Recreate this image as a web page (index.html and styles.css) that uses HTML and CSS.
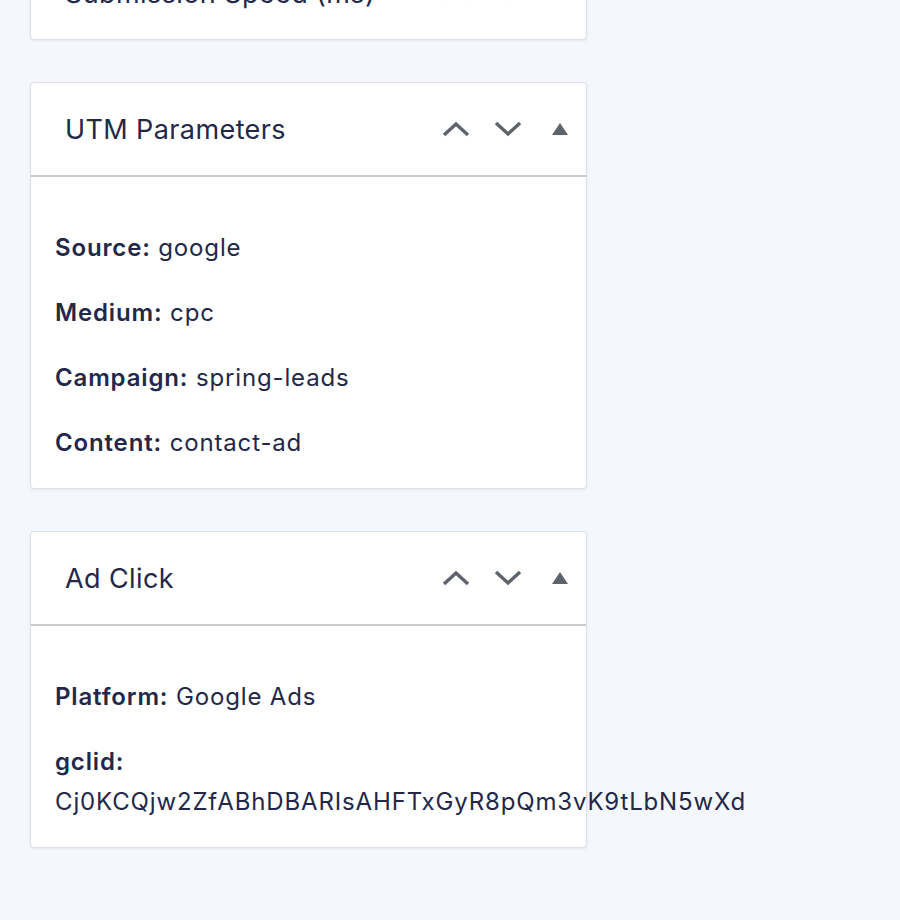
FILE: index.html
```html
<!DOCTYPE html>
<html lang="en">
<head>
    <meta charset="UTF-8">
    <meta name="viewport" content="width=device-width, initial-scale=1.0">
    <title>Entry Details</title>
    <link rel="stylesheet" href="styles.css">
</head>
<body>

<div class="sidebar">

    <!-- Collapsed box -->
    <div class="postbox closed">
        <div class="postbox-header">
            <h2>Submission Speed (ms)</h2>
            <div class="handle-actions">
                <button class="handle up"><svg viewBox="0 0 28 16"><path d="M2 14 L14 3 L26 14"/></svg></button>
                <button class="handle down"><svg viewBox="0 0 28 16"><path d="M2 2 L14 13 L26 2"/></svg></button>
                <button class="handle toggle"><svg viewBox="0 0 16 12"><path d="M8 0 L16 12 L0 12 Z"/></svg></button>
            </div>
        </div>
    </div>

    <!-- UTM -->
    <div class="postbox">
        <div class="postbox-header">
            <h2>UTM Parameters</h2>
            <div class="handle-actions">
                <button class="handle up"><svg viewBox="0 0 28 16"><path d="M2 14 L14 3 L26 14"/></svg></button>
                <button class="handle down"><svg viewBox="0 0 28 16"><path d="M2 2 L14 13 L26 2"/></svg></button>
                <button class="handle toggle"><svg viewBox="0 0 16 12"><path d="M8 0 L16 12 L0 12 Z"/></svg></button>
            </div>
        </div>
        <div class="inside">
            <p><strong>Source:</strong> google</p>
            <p><strong>Medium:</strong> cpc</p>
            <p><strong>Campaign:</strong> spring-leads</p>
            <p><strong>Content:</strong> contact-ad</p>
        </div>
    </div>

    <!-- Ad click -->
    <div class="postbox">
        <div class="postbox-header">
            <h2>Ad Click</h2>
            <div class="handle-actions">
                <button class="handle up"><svg viewBox="0 0 28 16"><path d="M2 14 L14 3 L26 14"/></svg></button>
                <button class="handle down"><svg viewBox="0 0 28 16"><path d="M2 2 L14 13 L26 2"/></svg></button>
                <button class="handle toggle"><svg viewBox="0 0 16 12"><path d="M8 0 L16 12 L0 12 Z"/></svg></button>
            </div>
        </div>
        <div class="inside">
            <p><strong>Platform:</strong> Google Ads</p>
            <p><strong>gclid:</strong> Cj0KCQjw2ZfABhDBARIsAHFTxGyR8pQm3vK9tLbN5wXd</p>
        </div>
    </div>

</div>

</body>
</html>
```

FILE: styles.css
```css
body {
    margin: 0;
    background: #f4f7fb;
    font-family: 'Inter', 'Noto Sans', sans-serif;
    color: #232849;
}
.sidebar {
    width: 557px;
    margin-left: 30px;
    margin-top: -54px;
}
.postbox {
    background: #fff;
    border: 1px solid #dfe0ea;
    border-radius: 4px;
    box-shadow: 0 1px 3px rgba(40, 50, 90, 0.08);
    margin-bottom: 42px;
}
.postbox-header {
    display: flex;
    align-items: center;
    justify-content: space-between;
    height: 92px;
    padding: 0 18px 0 34px;
    border-bottom: 2px solid #c9cacf;
}
.postbox.closed .postbox-header {
    border-bottom: none;
}
.postbox-header h2 {
    margin: 0;
    font-size: 27px;
    font-weight: 400;
    letter-spacing: 0.4px;
}
.handle-actions {
    display: flex;
    align-items: center;
    gap: 24px;
}
.handle {
    background: none;
    border: none;
    padding: 0;
    display: flex;
    cursor: pointer;
}
.handle svg {
    width: 28px;
    height: 16px;
    fill: none;
    stroke: #5f646b;
    stroke-width: 3.5;
}
.handle.toggle {
    margin-left: 6px;
}
.handle.toggle svg {
    width: 16px;
    height: 12px;
    fill: #5f646b;
    stroke: none;
}
.inside {
    padding: 26px 24px 0;
    font-size: 24px;
    line-height: 40px;
    letter-spacing: 0.85px;
}
.inside p {
    margin: 25px 0;
}
.inside strong {
    font-weight: 600;
}
```
